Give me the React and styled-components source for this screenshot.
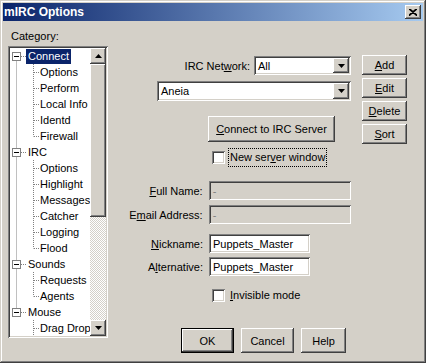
import { createGlobalStyle, styled } from 'styled-components'

const GlobalStyle = createGlobalStyle`
  body {
    margin: 0;
    background: #d4d0c8;
    font-family: "Liberation Sans", Arial, sans-serif;
    font-size: 11px;
    color: #000;
  }
`

const raised = `
  box-shadow: inset -1px -1px #404040, inset 1px 1px #fff,
    inset -2px -2px #808080, inset 2px 2px #d4d0c8;
`
const sunken = `
  box-shadow: inset 1px 1px #808080, inset -1px -1px #fff,
    inset 2px 2px #404040, inset -2px -2px #d4d0c8;
`

const Window = styled.div`
  width: 426px;
  height: 363px;
  box-sizing: border-box;
  padding: 3px;
  background: #d4d0c8;
  box-shadow: inset -1px -1px #404040, inset 1px 1px #d4d0c8,
    inset -2px -2px #808080, inset 2px 2px #fff;
  display: flex;
  flex-direction: column;
`

const TitleBar = styled.div`
  height: 18px;
  flex: none;
  display: flex;
  align-items: center;
  justify-content: space-between;
  padding: 0 2px 0 1px;
  background: linear-gradient(to right, #0a246a, #a6caf0);
`

const Title = styled.span`
  color: #fff;
  font-weight: bold;
  font-size: 12px;
`

const CloseButton = styled.div`
  width: 16px;
  height: 14px;
  background: #d4d0c8;
  ${raised}
  display: flex;
  align-items: center;
  justify-content: center;
`

const Body = styled.div`
  flex: 1;
  display: flex;
  padding: 9px 0 0 5px;
`

const LeftCol = styled.div`
  width: 100px;
  display: flex;
  flex-direction: column;
`

const CategoryLabel = styled.div`
  line-height: 13px;
  margin: 0 0 3px 3px;
`

const Tree = styled.div`
  width: 100px;
  height: 292px;
  box-sizing: border-box;
  padding: 2px;
  background: #fff;
  ${sunken}
  display: flex;
`

const TreeContent = styled.div`
  width: 80px;
  position: relative;
  overflow: hidden;
`

const TreeLines = styled.svg`
  position: absolute;
  left: 0;
  top: 0;
`

const TreeRow = styled.div`
  position: relative;
  height: 16px;
  line-height: 16px;
  padding-left: ${p => (p.$level ? 28 : 16)}px;
  white-space: nowrap;
`

const TreeText = styled.span`
  padding: 0 2px;
  display: inline-block;
  height: 15px;
  line-height: 15px;
  background: ${p => (p.$selected ? '#0a246a' : 'transparent')};
  color: ${p => (p.$selected ? '#fff' : '#000')};
`

const ScrollBar = styled.div`
  width: 16px;
  display: flex;
  flex-direction: column;
`

const ScrollButton = styled.div`
  width: 16px;
  height: 16px;
  flex: none;
  background: #d4d0c8;
  ${raised}
  display: flex;
  align-items: center;
  justify-content: center;
`

const Thumb = styled.div`
  height: 153px;
  flex: none;
  background: #d4d0c8;
  ${raised}
`

const Track = styled.div`
  flex: 1;
  background: repeating-conic-gradient(#d4d0c8 0 25%, #fff 0 50%) 0 0 / 2px
    2px;
`

const RightPanel = styled.div`
  margin-left: 12px;
  padding-top: 25px;
  display: flex;
  gap: 11px;
`

const MainCol = styled.div`
  width: 231px;
  display: flex;
  flex-direction: column;
`

const SideCol = styled.div`
  width: 45px;
  display: flex;
  flex-direction: column;
  gap: 3px;
`

const NetworkRow = styled.div`
  margin-top: 1px;
  height: 19px;
  display: flex;
  align-items: center;
  justify-content: flex-end;
  gap: 4px;
`

const Combo = styled.div`
  width: ${p => p.$width}px;
  height: ${p => p.$height}px;
  margin-left: ${p => p.$left || 0}px;
  margin-top: ${p => p.$top || 0}px;
  box-sizing: border-box;
  padding: 2px;
  background: #fff;
  ${sunken}
  display: flex;
  align-items: stretch;
`

const ComboText = styled.div`
  flex: 1;
  padding-left: 2px;
  display: flex;
  align-items: center;
`

const ComboButton = styled.div`
  width: 16px;
  background: #d4d0c8;
  ${raised}
  display: flex;
  align-items: center;
  justify-content: center;
`

const Button = styled.div`
  width: ${p => p.$width}px;
  height: ${p => p.$height || 20}px;
  margin-left: ${p => p.$left || 0}px;
  margin-top: ${p => p.$top || 0}px;
  box-sizing: border-box;
  background: #d4d0c8;
  ${raised}
  display: flex;
  align-items: center;
  justify-content: center;
  flex: none;
`

const DefaultButton = styled(Button)`
  border: 1px solid #000;
`

const CheckRow = styled.div`
  margin-top: ${p => p.$top}px;
  height: 19px;
  padding-left: 92px;
  display: flex;
  align-items: center;
`

const CheckBox = styled.span`
  width: 13px;
  height: 13px;
  background: #fff;
  ${sunken}
  flex: none;
`

const CheckLabel = styled.span`
  margin-left: 3px;
  padding: 2px 1px;
  border: 1px dotted ${p => (p.$focused ? '#000' : 'transparent')};
  line-height: 13px;
`

const Field = styled.div`
  margin-top: ${p => p.$top}px;
  height: 19px;
  display: flex;
  align-items: center;
`

const FieldLabel = styled.span`
  width: 83px;
  margin-right: 6px;
  text-align: right;
  white-space: nowrap;
`

const Input = styled.div`
  width: ${p => p.$width}px;
  height: 19px;
  box-sizing: border-box;
  padding: 0 4px;
  background: ${p => (p.$disabled ? '#d4d0c8' : '#fff')};
  color: ${p => (p.$disabled ? '#808080' : '#000')};
  ${sunken}
  display: flex;
  align-items: center;
`

const ButtonRow = styled.div`
  margin-top: 23px;
  padding-left: 61px;
  display: flex;
  gap: 7px;
`

const U = styled.span`
  text-decoration: underline;
`

// the last node has more children below the visible area
const tree = [
  { label: 'Connect', children: ['Options', 'Perform', 'Local Info', 'Identd', 'Firewall'] },
  { label: 'IRC', children: ['Options', 'Highlight', 'Messages', 'Catcher', 'Logging', 'Flood'] },
  { label: 'Sounds', children: ['Requests', 'Agents'] },
  { label: 'Mouse', children: ['Drag Drop'], more: true },
]

const rows = []
tree.forEach(node => {
  rows.push({ label: node.label, level: 0 })
  node.children.forEach(c => rows.push({ label: c, level: 1 }))
})

function TreeDrawing() {
  const lines = []
  const boxes = []
  let i = 0
  const rootYs = []
  tree.forEach((node, n) => {
    const py = i * 16 + 8.5
    rootYs.push(py)
    lines.push(<line key={'h' + n} x1="11" y1={py} x2="16" y2={py} />)
    const first = i + 1
    const last = i + node.children.length
    lines.push(
      <line
        key={'v' + n}
        x1="23.5"
        y1={first * 16}
        x2="23.5"
        y2={node.more ? 300 : last * 16 + 8.5}
      />
    )
    node.children.forEach((c, k) => {
      const cy = (first + k) * 16 + 8.5
      lines.push(<line key={'c' + n + k} x1="24" y1={cy} x2="29" y2={cy} />)
    })
    boxes.push(
      <g key={'b' + n}>
        <rect x="2.5" y={py - 4} width="8" height="8" fill="#fff" stroke="#808080" />
        <line x1="4" y1={py} x2="9" y2={py} stroke="#000" />
      </g>
    )
    i = last + 1
  })
  return (
    <TreeLines width="80" height="300">
      <g stroke="#808080" strokeDasharray="1 1">
        <line x1="6.5" y1={rootYs[0]} x2="6.5" y2={rootYs[rootYs.length - 1]} />
        {lines}
      </g>
      {boxes}
    </TreeLines>
  )
}

const Arrow = ({ up }) => (
  <svg width="7" height="4" viewBox="0 0 7 4">
    <path d={up ? 'M3.5 0 L7 4 L0 4 Z' : 'M0 0 L7 0 L3.5 4 Z'} fill="#000" />
  </svg>
)

function App() {
  return (
    <>
      <GlobalStyle />
      <Window>
        <TitleBar>
          <Title>mIRC Options</Title>
          <CloseButton>
            <svg width="8" height="7" viewBox="0 0 8 7">
              <path d="M0 0 L8 7 M8 0 L0 7 M1 0 L8 6 M7 0 L0 6" stroke="#000" strokeWidth="1.1" />
            </svg>
          </CloseButton>
        </TitleBar>
        <Body>
          <LeftCol>
            <CategoryLabel>Category:</CategoryLabel>
            <Tree>
              <TreeContent>
                <TreeDrawing />
                {rows.map((r, idx) => (
                  <TreeRow key={idx} $level={r.level}>
                    <TreeText $selected={idx === 0}>{r.label}</TreeText>
                  </TreeRow>
                ))}
              </TreeContent>
              <ScrollBar>
                <ScrollButton>
                  <Arrow up />
                </ScrollButton>
                <Thumb />
                <Track />
                <ScrollButton>
                  <Arrow />
                </ScrollButton>
              </ScrollBar>
            </Tree>
          </LeftCol>
          <RightPanel>
            <MainCol>
              <NetworkRow>
                <span>
                  IRC Net<U>w</U>ork:
                </span>
                <Combo $width={97} $height={19}>
                  <ComboText>All</ComboText>
                  <ComboButton>
                    <Arrow />
                  </ComboButton>
                </Combo>
              </NetworkRow>
              <Combo $width={194} $height={20} $left={37} $top={6}>
                <ComboText>Aneia</ComboText>
                <ComboButton>
                  <Arrow />
                </ComboButton>
              </Combo>
              <Button $width={127} $height={26} $left={88} $top={15}>
                <span>
                  <U>C</U>onnect to IRC Server
                </span>
              </Button>
              <CheckRow $top={6}>
                <CheckBox />
                <CheckLabel $focused>
                  New ser<U>v</U>er window
                </CheckLabel>
              </CheckRow>
              <Field $top={14}>
                <FieldLabel>
                  <U>F</U>ull Name:
                </FieldLabel>
                <Input $width={143} $disabled>
                  -
                </Input>
              </Field>
              <Field $top={5}>
                <FieldLabel>
                  E<U>m</U>ail Address:
                </FieldLabel>
                <Input $width={143} $disabled>
                  -
                </Input>
              </Field>
              <Field $top={10}>
                <FieldLabel>
                  <U>N</U>ickname:
                </FieldLabel>
                <Input $width={101}>Puppets_Master</Input>
              </Field>
              <Field $top={4}>
                <FieldLabel>
                  A<U>l</U>ternative:
                </FieldLabel>
                <Input $width={101}>Puppets_Master</Input>
              </Field>
              <CheckRow $top={10}>
                <CheckBox />
                <CheckLabel>
                  <U>I</U>nvisible mode
                </CheckLabel>
              </CheckRow>
              <ButtonRow>
                <DefaultButton $width={53} $height={25}>
                  OK
                </DefaultButton>
                <Button $width={53} $height={25}>
                  Cancel
                </Button>
                <Button $width={45} $height={25}>
                  Help
                </Button>
              </ButtonRow>
            </MainCol>
            <SideCol>
              <Button $width={45}>
                <span>
                  <U>A</U>dd
                </span>
              </Button>
              <Button $width={45}>
                <span>
                  <U>E</U>dit
                </span>
              </Button>
              <Button $width={45}>
                <span>
                  <U>D</U>elete
                </span>
              </Button>
              <Button $width={45}>
                <span>
                  <U>S</U>ort
                </span>
              </Button>
            </SideCol>
          </RightPanel>
        </Body>
      </Window>
    </>
  )
}

export default App
